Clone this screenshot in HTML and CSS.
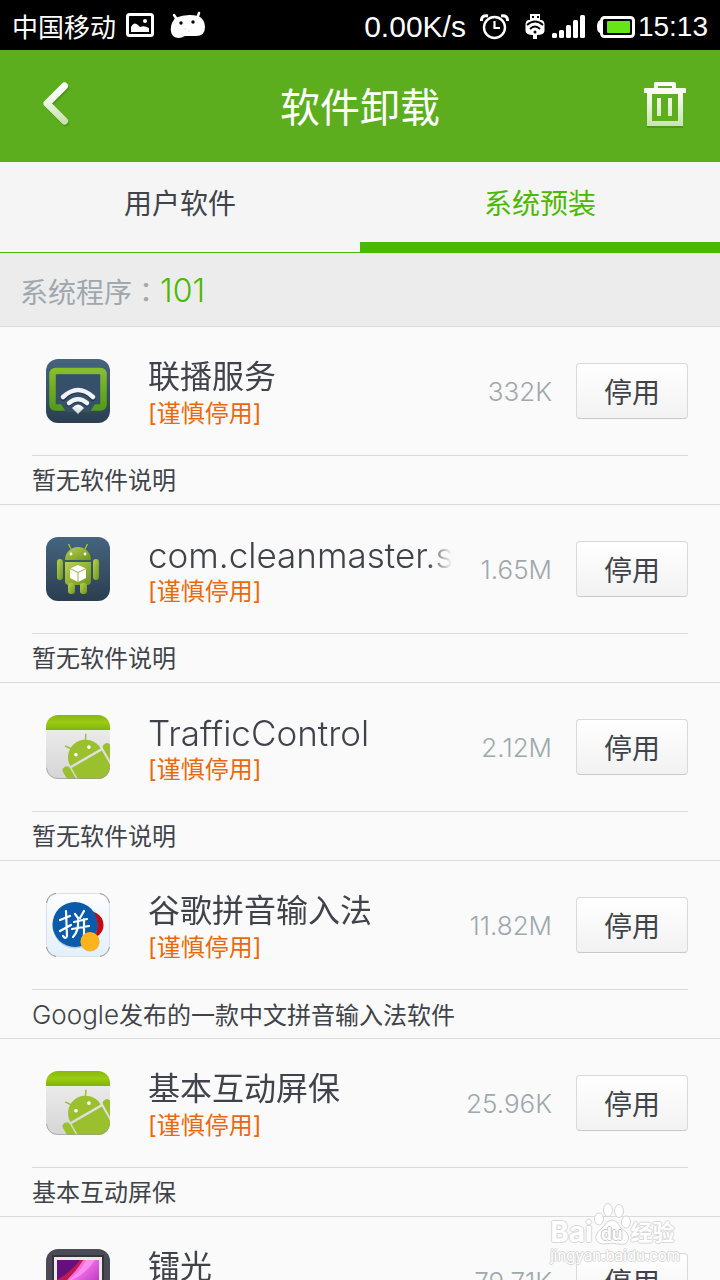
FILE: index.html
```html
<!DOCTYPE html>
<html lang="zh-CN">
<head>
<meta charset="utf-8">
<meta name="viewport" content="width=device-width, initial-scale=1">
<title>软件卸载</title>
<link rel="stylesheet" href="styles.css">
</head>
<body>
<svg class="defs" aria-hidden="true">
  <defs>
    <linearGradient id="fade" x1="0" y1="0" x2="0" y2="1"><stop offset="0" stop-color="#fff"/><stop offset=".3" stop-color="#f6faf1"/><stop offset="1" stop-color="#c9e3b2"/></linearGradient>
    <linearGradient id="slate" x1="0" y1="0" x2="0" y2="1"><stop offset="0" stop-color="#46647f"/><stop offset="1" stop-color="#2b3e50"/></linearGradient>
    <linearGradient id="green" x1="0" y1="0" x2="0" y2="1"><stop offset="0" stop-color="#85bd2c"/><stop offset="1" stop-color="#559c1b"/></linearGradient>
    <linearGradient id="wifi" x1="0" y1="0" x2="0" y2="1"><stop offset="0" stop-color="#fff"/><stop offset="1" stop-color="#c9d2e3"/></linearGradient>
    <linearGradient id="robot" x1="0" y1="0" x2="1" y2="1"><stop offset="0" stop-color="#b9d34b"/><stop offset="1" stop-color="#6d9420"/></linearGradient>
    <linearGradient id="lime" x1="0" y1="0" x2="0" y2="1"><stop offset="0" stop-color="#88b80c"/><stop offset=".5" stop-color="#9bcb12"/><stop offset="1" stop-color="#80b40b"/></linearGradient>
    <linearGradient id="silver" x1="0" y1="0" x2="0" y2="1"><stop offset="0" stop-color="#f1f1f1"/><stop offset="1" stop-color="#d5d5d5"/></linearGradient>
    <linearGradient id="ice" x1="0" y1="0" x2="0" y2="1"><stop offset="0" stop-color="#fdfdfe"/><stop offset="1" stop-color="#e2f0fc"/></linearGradient>
    <linearGradient id="photo" x1="0" y1="0" x2="1" y2="1"><stop offset="0" stop-color="#e4404c"/><stop offset=".25" stop-color="#f06ca8"/><stop offset=".4" stop-color="#f76df0"/><stop offset="1" stop-color="#8b1896"/></linearGradient>
    <clipPath id="tile"><rect width="64" height="64" rx="12"/></clipPath>
    <symbol id="droid-card" viewBox="0 0 64 64">
      <g clip-path="url(#tile)">
        <rect width="64" height="64" fill="url(#silver)"/>
        <rect width="64" height="15" fill="url(#lime)"/>
        <g transform="translate(40 43) rotate(-30)" fill="#9bc02d">
          <path d="M-17.500-1A17.500 17.500 0 0 1 17.500-1Z"/>
          <path d="M-17.500 1.500H17.500V33H-17.500Z"/>
          <rect x="-27" y="-3" width="8" height="28" rx="4"/><rect x="19.500" y="-3" width="8" height="28" rx="4"/>
          <path d="M-8-15L-12-21M8-15L12-21" stroke="#9bc02d" stroke-width="1.500"/>
          <circle cx="-7" cy="-8" r="1.800" fill="#fff"/><circle cx="8" cy="-8" r="1.800" fill="#fff"/>
        </g>
      </g>
      <path d="M.5 53Q2 63 12 63.500H52Q62 63 63.500 53" fill="none" stroke="#999" stroke-width=".7"/>
    </symbol>
  </defs>
</svg>

<div class="app">
  <div class="status">
    <span class="carrier">中国移动</span>
    <svg class="ic-picture" width="28" height="24" viewBox="0 0 28 24"><rect x="1.500" y="1.500" width="25" height="21" rx="2" fill="none" stroke="#fff" stroke-width="3"/><path d="M5 19V14Q8 8 12 12L14 14Q18 12 23 15V19Z" fill="#fff"/><circle cx="19" cy="8" r="2" fill="#fff"/></svg>
    <svg class="ic-cat" width="36" height="28" viewBox="0 0 36 28"><path d="M4 4L8 10M29 2L27 8" stroke="#fff" stroke-width="2.500" stroke-linecap="round"/><path d="M5 7Q17 2 28 5Q35 8 35 16Q35 26 24 25Q18 25 15 25Q8 29 3 25Q-1 20 2 12Z" fill="#fff"/><circle cx="11" cy="12" r="1.700"/><circle cx="23" cy="11" r="1.700"/><circle cx="15" cy="18" r=".6" fill="#bbb"/><circle cx="19" cy="20" r=".6" fill="#bbb"/></svg>
    <div class="indicators">
      <span class="speed">0.00K/s</span>
      <svg class="ic-alarm" width="29" height="26" viewBox="0 0 29 26" fill="none" stroke="#fff"><circle cx="14.500" cy="13.500" r="10.500" stroke-width="2.400"/><path d="M14.500 7V14H20" stroke-width="2.200"/><path d="M1.500 7Q1 1 8 2M27.500 7Q28 1 21 2" stroke-width="3"/></svg>
      <svg class="ic-usb" width="20" height="26" viewBox="0 0 20 26"><path d="M5 0H15V6H17Q19.500 7 19.500 10V17Q19 21 12 21V25H8V21Q1 21 .5 17V10Q.5 7 3 6H5Z" fill="#fff"/><path d="M7 3H9M12 3H14M2 11Q10 4 18 11M5 15Q10 10 15 15" fill="none" stroke="#000" stroke-width="1.800"/><circle cx="10" cy="18" r="1.500"/></svg>
      <svg class="ic-signal" width="34" height="24" viewBox="0 0 34 24" fill="#fff"><rect y="18" width="5" height="5" rx="1.500"/><rect x="7" y="15" width="5" height="8" rx="1.500"/><rect x="14" y="10" width="5" height="13" rx="1.500"/><rect x="21" y="5" width="5" height="18" rx="1.500"/><rect x="28" width="5" height="23" rx="1.500"/></svg>
      <svg class="ic-battery" width="38" height="22" viewBox="0 0 38 22"><path d="M4 4Q0 4 0 11Q0 17 4 17Z" fill="#fff"/><rect x="4.500" y="1.500" width="32" height="19" rx="3" fill="none" stroke="#fff" stroke-width="3"/><rect x="10" y="5" width="23" height="12" rx="1" fill="#66e619"/></svg>
      <span class="clock">15:13</span>
    </div>
  </div>

  <header class="header">
    <button class="icon-btn" type="button" aria-label="返回"><svg width="48" height="48" viewBox="0 0 48 48"><path d="M33.500 6L16 23.500L33.500 41" transform="translate(1 2)" fill="none" stroke="#4b9818" stroke-width="7" stroke-linecap="round" stroke-linejoin="round"/><path d="M33.500 6L16 23.500L33.500 41" fill="none" stroke="url(#fade)" stroke-width="7" stroke-linecap="round" stroke-linejoin="round"/></svg></button>
    <h1 class="title">软件卸载</h1>
    <button class="icon-btn" type="button" aria-label="回收站"><svg width="48" height="48" viewBox="0 0 48 48"><path d="M6 46H42V48H6Z" fill="#4b9818"/><path fill-rule="evenodd" fill="url(#fade)" d="M14 2H33Q35 2 35 4V8H44Q45 8 45 9V13H42V46H6V13H3V9Q3 8 4 8H13V4Q13 2 14 2ZM17 6V8H31V6ZM11 14V41H37V14ZM16 18H20V36H16ZM27 18H31V36H27Z"/></svg></button>
  </header>

  <nav class="tabs">
    <a class="tab" href="#user">用户软件</a>
    <a class="tab active" href="#system" aria-current="page">系统预装</a>
  </nav>
  <p class="count">系统程序<span class="colon">：</span><strong>101</strong></p>

  <ul class="list">
    <li class="item">
      <div class="main">
        <svg class="logo" viewBox="0 0 64 64"><rect width="64" height="64" rx="12" fill="url(#slate)"/><path d="M20 48.500H10Q6.500 48.500 6.500 45V15.500Q6.500 12 10 12H54Q57.500 12 57.500 15.500V45Q57.500 48.500 54 48.500H45" fill="none" stroke="url(#green)" stroke-width="6.500"/><path d="M20 53L15 45H10V17Q10 15.500 11.500 15.500H52.500Q54 15.500 54 17V45H49L44 53Z" fill="#36506a"/><path d="M17 39.500Q32 24 47 39.500M23 45Q32 37 41 45" fill="none" stroke="#223449" stroke-width="5" stroke-linecap="round"/><path d="M17 38Q32 24 47 38M23 44Q32 36.500 41 44" fill="none" stroke="#f1f3fa" stroke-width="4.500" stroke-linecap="round"/><path d="M26 49Q32 42 38 49L32 55Z" fill="url(#wifi)"/></svg>
        <div class="info"><h2 class="name">联播服务</h2><span class="tag">[谨慎停用]</span></div>
        <span class="size">332K</span>
        <button class="stop" type="button">停用</button>
      </div>
      <p class="desc">暂无软件说明</p>
    </li>
    <li class="item">
      <div class="main">
        <svg class="logo" viewBox="0 0 64 64"><rect width="64" height="64" rx="12" fill="url(#slate)"/><g fill="url(#robot)"><path d="M19 23A13 13 0 0 1 45 23Z"/><path d="M19 25H45V44Q45 48 41 48H23Q19 48 19 44Z"/><rect x="11" y="22" width="6" height="21" rx="3"/><rect x="47" y="22" width="6" height="21" rx="3"/><rect x="22" y="46" width="7" height="11" rx="3"/><rect x="34" y="46" width="7" height="11" rx="3"/></g><path d="M25 12L22.500 7M39 12L41.500 7" stroke="#a4c639" stroke-width="1.300"/><circle cx="25" cy="17" r="1.400" fill="#fff"/><circle cx="39" cy="17" r="1.400" fill="#fff"/><path d="M32 28L40 31.500V41L32 45L24 41V31.500Z" fill="#fff"/><path d="M24 31.500L32 35.500L40 31.500M32 35.500V45" fill="none" stroke="#88a83b" stroke-width=".9"/></svg>
        <div class="info"><h2 class="name latin">com.cleanmaster.s</h2><span class="tag">[谨慎停用]</span></div>
        <span class="size">1.65M</span>
        <button class="stop" type="button">停用</button>
      </div>
      <p class="desc">暂无软件说明</p>
    </li>
    <li class="item">
      <div class="main">
        <svg class="logo"><use href="#droid-card"/></svg>
        <div class="info"><h2 class="name latin">TrafficControl</h2><span class="tag">[谨慎停用]</span></div>
        <span class="size">2.12M</span>
        <button class="stop" type="button">停用</button>
      </div>
      <p class="desc">暂无软件说明</p>
    </li>
    <li class="item">
      <div class="main">
        <svg class="logo" viewBox="0 0 64 64"><rect x=".5" y=".5" width="63" height="63" rx="12" fill="url(#ice)" stroke="#d3d9df" stroke-width=".8"/><path d="M.5 10Q2 1 10 .5M54 .5Q62 2 63.500 10M.5 54Q2 62 10 63.500M54 63.500Q62 62 63.500 54" fill="none" stroke="#777" stroke-width=".7"/><circle cx="44" cy="32" r="13.500" fill="#c10a12"/><circle cx="29" cy="33" r="22.500" fill="#8fa8bd" opacity=".5"/><circle cx="29" cy="31.500" r="22.500" fill="#0a5cab"/><g fill="none" stroke="#fff" stroke-width="2.200" stroke-linecap="round"><path d="M14 27L24 23M20 18L21 43Q20 47 17 43M14 38L25 32M29 21L32 25M38 18L34 25M28 29L41 26M26 36L43 33M32 27Q33 38 27 44M38 26L38 46"/></g><circle cx="44" cy="49" r="9.500" fill="#a8a39a" opacity=".6"/><circle cx="44" cy="48.500" r="9.500" fill="#ffb31a"/></svg>
        <div class="info"><h2 class="name">谷歌拼音输入法</h2><span class="tag">[谨慎停用]</span></div>
        <span class="size">11.82M</span>
        <button class="stop" type="button">停用</button>
      </div>
      <p class="desc"><span class="brand">Google</span>发布的一款中文拼音输入法软件</p>
    </li>
    <li class="item">
      <div class="main">
        <svg class="logo"><use href="#droid-card"/></svg>
        <div class="info"><h2 class="name">基本互动屏保</h2><span class="tag">[谨慎停用]</span></div>
        <span class="size">25.96K</span>
        <button class="stop" type="button">停用</button>
      </div>
      <p class="desc">基本互动屏保</p>
    </li>
    <li class="item">
      <div class="main">
        <svg class="logo" viewBox="0 0 64 64"><rect width="64" height="64" rx="12" fill="#4b4b57"/><rect x="6" y="6" width="52" height="52" fill="#33333c"/><rect x="8" y="8" width="48" height="48" fill="#e9e9ec"/><rect x="11" y="11" width="42" height="42" fill="url(#photo)"/><path d="M11 11H37L21 31Q14 32 11 38Z" fill="#65107c"/><path d="M37 11Q28 27 11 38V31Q24 24 34 11Z" fill="#c01b4e"/><path d="M40 11Q34 25 18 34Q38 28 49 11Z" fill="#ffa5f3" opacity=".6"/></svg>
        <div class="info"><h2 class="name">镭光</h2><span class="tag">[谨慎停用]</span></div>
        <span class="size">79.71K</span>
        <button class="stop" type="button">停用</button>
      </div>
      <p class="desc">暂无软件说明</p>
    </li>
  </ul>

  <div class="watermark">
    <div class="mark-row">
      <span class="mark-text">Bai</span>
      <span class="paw"><svg width="38" height="44" viewBox="0 0 38 44" fill="#fff" stroke="#d5d5d5"><ellipse cx="6" cy="17" rx="4.500" ry="6"/><ellipse cx="15" cy="8" rx="4.500" ry="6.500"/><ellipse cx="26" cy="9" rx="4.500" ry="6.500"/><ellipse cx="33" cy="20" rx="4.500" ry="6"/><path d="M19 18Q24 18 27 25L34 31Q38 38 32 42Q28 43 19 41Q10 43 6 41Q0 37 5 30L11 24Q14 18 19 18Z"/></svg><b class="du">du</b></span>
      <span class="mark-text mark-cn">经验</span>
    </div>
    <div class="mark-url">jingyan.baidu.com</div>
  </div>
</div>
</body>
</html>
```
FILE: styles.css
```css
* { box-sizing: border-box; }

body {
  margin: 0;
  font-family: Inter, "Noto Sans CJK SC", sans-serif;
  font-weight: 400;
  color: #40434a;
  background: #fafafa;
}

h1, h2, p, ul { margin: 0; padding: 0; }

button { font-family: inherit; cursor: pointer; }

.defs { position: absolute; width: 0; height: 0; }

.app {
  position: relative;
  display: flex;
  flex-direction: column;
  height: 100vh;
  overflow: hidden;
}

.status {
  flex: none;
  display: flex;
  align-items: center;
  height: 50px;
  padding: 0 12px;
  color: #fff;
  background: #000;
  font-family: "Liberation Sans", "Noto Sans CJK SC", sans-serif;
  white-space: nowrap;
}

.indicators {
  display: flex;
  align-items: center;
  margin-left: auto;
  padding-top: 3px;
}

.carrier { font-size: 26px; }
.speed { font-size: 30px; line-height: 40px; }
.clock { font-size: 28px; line-height: 40px; }
.ic-picture { margin-left: 10px; }
.ic-cat { margin-left: 16px; }
.ic-alarm { margin-left: 14px; }
.ic-usb { margin-left: 16px; }
.ic-signal { margin-left: 7px; }
.ic-battery { margin: 0 3px 0 11px; }

.header {
  flex: none;
  display: flex;
  align-items: center;
  justify-content: space-between;
  height: 112px;
  padding: 0 31px 4px;
  background: #5dae1f;
}

.icon-btn {
  display: flex;
  padding: 0;
  border: 0;
  background: none;
}

.title {
  padding-top: 8px;
  color: #fff;
  font-size: 40px;
  font-weight: 400;
  line-height: 56px;
}

.tabs {
  flex: none;
  display: grid;
  grid-template-columns: 1fr 1fr;
  height: 91px;
  background: #f5f5f5;
  border-bottom: 1px solid #4bb900;
}

.tab {
  padding-top: 21px;
  color: #40434a;
  font-size: 28px;
  line-height: 42px;
  text-align: center;
  text-decoration: none;
}

.tab.active {
  color: #4bb900;
  border-bottom: 10px solid #4bb900;
}

.count {
  flex: none;
  display: flex;
  align-items: center;
  height: 74px;
  padding: 2px 20px 0;
  color: #9fa8ad;
  background: #ececec;
  border-bottom: 1px solid #dadada;
  font-size: 28px;
}

.colon { font-family: "Noto Sans CJK TC", sans-serif; }

.count strong { color: #4bb900; font-size: 32px; font-weight: 300; }

.list { flex: 1; min-height: 0; overflow: hidden; list-style: none; }

.item { padding: 0 32px; border-bottom: 1px solid #dadada; }

.main {
  display: flex;
  align-items: center;
  height: 129px;
  padding-left: 14px;
  border-bottom: 1px solid #dadada;
}

.logo { flex: none; width: 64px; height: 64px; }

.info { flex: 1; min-width: 0; margin-left: 38px; padding-top: 3px; }

.name {
  overflow: hidden;
  font-size: 32px;
  font-weight: 400;
  line-height: 42px;
  white-space: nowrap;
  mask-image: linear-gradient(to left, transparent, #000 24px);
}

.name.latin { font-size: 35px; font-weight: 300; }

.tag { display: block; color: #e96a0a; font-size: 24px; line-height: 32px; }

.size {
  width: 100px;
  color: #9fa8ad;
  font-size: 26px;
  font-weight: 300;
  text-align: right;
}

.stop {
  width: 112px;
  height: 56px;
  margin-left: 24px;
  padding: 0;
  color: #40434a;
  font-size: 28px;
  font-weight: 400;
  border: 1px solid #d9d9d9;
  border-bottom-color: #c8c8c8;
  border-radius: 4px;
  background: linear-gradient(#fff, #f2f2f2);
}

.desc { height: 48px; padding-top: 1px; font-size: 24px; line-height: 48px; white-space: nowrap; }

.brand { font-size: 26px; font-weight: 300; }

.watermark {
  position: absolute;
  right: 40px;
  bottom: 14px;
  color: #fff;
  pointer-events: none;
  text-shadow: 1px 0 #d8d8d8, -1px 0 #d8d8d8, 0 1px #d8d8d8, 0 -1px #d8d8d8;
}

.mark-row { display: flex; align-items: flex-end; }

.mark-text { font-size: 28px; font-weight: 700; line-height: 28px; }

.mark-cn { font-size: 22px; }

.paw { position: relative; display: flex; }

.du {
  position: absolute;
  right: 0;
  bottom: 2px;
  left: 0;
  font-size: 17px;
  line-height: 20px;
  text-align: center;
  text-shadow: 1px 0 #c8c8c8, -1px 0 #c8c8c8, 0 1px #c8c8c8, 0 -1px #c8c8c8;
}

.mark-url { font-size: 15px; line-height: 20px; text-align: center; }
```
